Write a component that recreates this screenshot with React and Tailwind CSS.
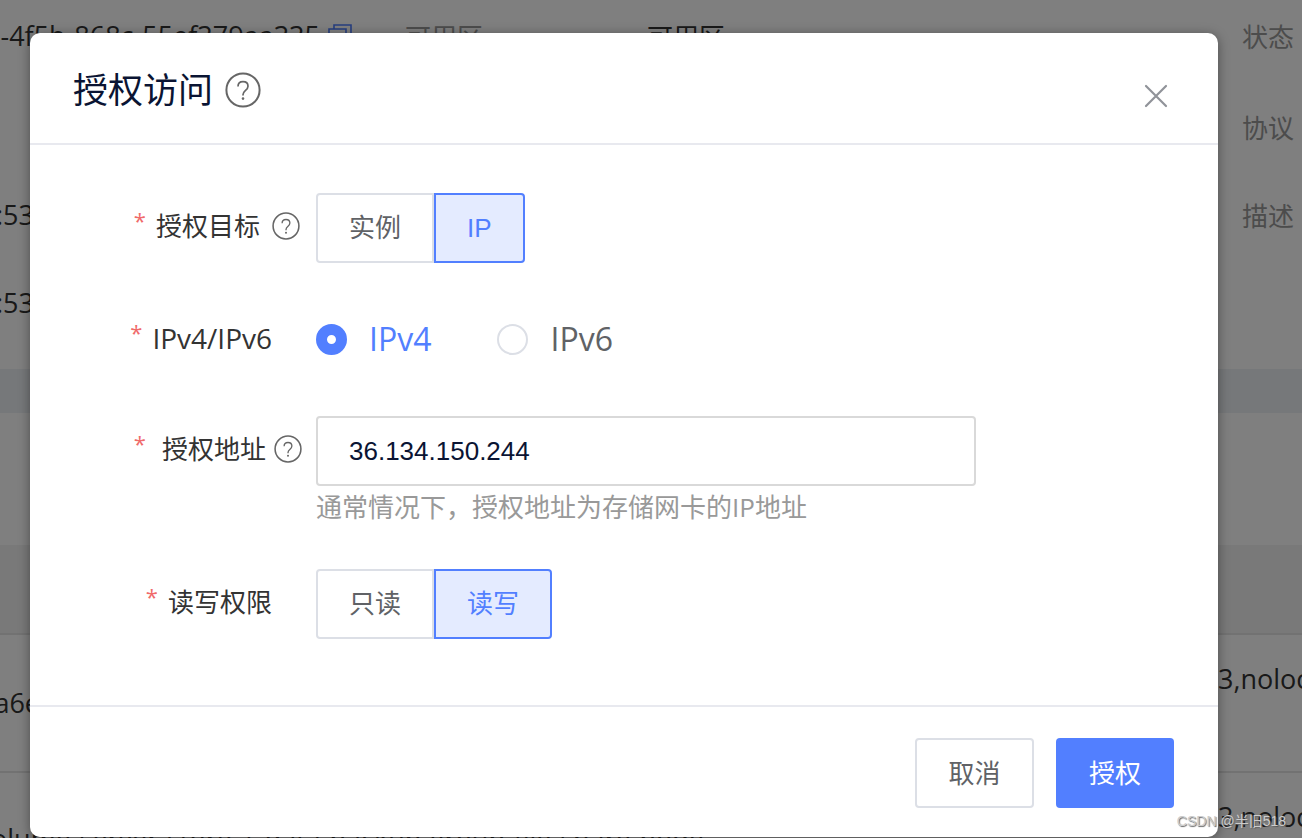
import { useState } from "react";

function HelpIcon({ className }) {
  return (
    <svg viewBox="0 0 36 36" className={className} fill="none" stroke="#666" aria-hidden="true">
      <circle cx="18" cy="18" r="16.6" strokeWidth="2" />
      <path
        d="M13 14.6c0-3 2-5 5-5s5 1.9 5 4.6c0 2.1-1.1 3.2-2.7 4.5-1.6 1.3-2.3 2.2-2.3 4.1v.7"
        strokeWidth="1.7"
      />
      <circle cx="18" cy="26.6" r="1.3" fill="#666" stroke="none" />
    </svg>
  );
}

function CopyIcon() {
  return (
    <svg viewBox="0 0 24 24" className="size-6" fill="none" stroke="#4d7cff" strokeWidth="1.6" aria-hidden="true">
      <path d="M6 5V1h17v17h-5" />
      <path d="M1 5h17v18H1z" />
    </svg>
  );
}

function FormLabel({ children, help, htmlFor, wide, latin }) {
  const Tag = htmlFor ? "label" : "div";
  const end = help ? (wide ? "pr-[14px]" : "pr-4") : "pr-11";
  return (
    <div
      className={`flex w-[286px] shrink-0 items-center justify-end text-[#333] ${end} ${
        latin ? "h-[68px] text-[28px]" : "h-[66px] text-[26px]"
      }`}
    >
      <span className={`pb-3 text-[22px] text-[#f06a6a] ${wide ? "mr-4" : "mr-[10px]"}`}>*</span>
      <Tag htmlFor={htmlFor}>{children}</Tag>
      {help && <HelpIcon className={`size-7 ${wide ? "ml-2" : "ml-3"}`} />}
    </div>
  );
}

function Segmented({ options, value, onChange, label }) {
  return (
    <div role="group" aria-label={label} className="flex h-[70px]">
      {options.map((o) => (
        <button
          key={o}
          type="button"
          aria-pressed={o === value}
          onClick={() => onChange(o)}
          className={`border-2 px-[31px] font-['Liberation_Sans','Noto_Sans_CJK_SC',sans-serif] text-[26px] first:rounded-l last:rounded-r ${
            o === value
              ? "border-[#527fff] bg-[#e4ebff] text-[#527fff]"
              : "border-[#dcdfe6] bg-white text-[#606266]"
          }`}
        >
          {o}
        </button>
      ))}
    </div>
  );
}

function Radio({ label, checked, onChange }) {
  return (
    <label className={`flex items-center gap-[22px] text-[32px] ${checked ? "text-[#527fff]" : "text-[#606266]"}`}>
      <input
        type="radio"
        name="ipVersion"
        checked={checked}
        onChange={onChange}
        className="size-[31px] appearance-none rounded-full border-2 border-[#dcdfe6] bg-white checked:border-[11px] checked:border-[#527fff]"
      />
      <span className="pb-[2px]">{label}</span>
    </label>
  );
}

function PageBehind() {
  return (
    <main className="h-full overflow-hidden whitespace-nowrap bg-white text-[27px] text-[#333]">
      <section className="h-[369px] pt-4">
        <div className="flex h-[89px] items-start">
          <div className="flex w-[405px] items-center">
            <div className="flex w-[320px] justify-end">-4f5b-868c-55ef379aa335</div>
            <span className="ml-2"><CopyIcon /></span>
          </div>
          <div className="w-[242px] pt-[2px] text-[26px] text-[#999]">可用区</div>
          <div className="flex-1 pt-[2px] text-[26px]">可用区</div>
          <div className="w-[60px] pt-[2px] text-[26px] text-[#999]">状态</div>
        </div>
        <div className="flex h-[90px] justify-end">
          <div className="w-[60px] pt-1 text-[26px] text-[#999]">协议</div>
        </div>
        <div className="flex h-[88px] justify-between">
          <div className="flex w-[34px] justify-end">:53</div>
          <div className="w-[60px] pt-[2px] text-[26px] text-[#999]">描述</div>
        </div>
        <div className="flex w-[34px] justify-end">:53</div>
      </section>
      <div className="h-11 bg-[#edf0f5]" />
      <div className="h-[132px]" />
      <div className="h-[90px] border-b-2 border-[#e4e4e4] bg-[#f3f3f3]" />
      <div className="flex h-[138px] justify-between border-b-2 border-[#e4e4e4]">
        <div className="flex w-10 justify-end pt-12">a6e</div>
        <div className="w-[84px] overflow-hidden pt-6">3,nolock</div>
      </div>
      <div className="flex h-[138px] justify-between">
        <div className="flex w-[704px] justify-end pt-[46px]">volume-server-store-1-data-backup-group-file-share-node</div>
        <div className="w-[84px] shrink-0 overflow-hidden pt-6">3,nolock</div>
      </div>
    </main>
  );
}

export default function App() {
  const [target, setTarget] = useState("IP");
  const [version, setVersion] = useState("IPv4");
  const [address, setAddress] = useState("36.134.150.244");
  const [access, setAccess] = useState("读写");

  return (
    <div className="relative h-screen overflow-hidden font-['Open_Sans','Noto_Sans_CJK_SC',sans-serif]">
      <PageBehind />
      <div className="absolute inset-0 flex items-start bg-black/50 pt-[33px] pr-[84px] pl-[30px]">
        <div
          role="dialog"
          aria-labelledby="dialog-title"
          className="min-w-0 flex-1 rounded-[10px] bg-white shadow-[0_2px_12px_rgba(0,0,0,0.4)]"
        >
          <header className="flex h-[112px] items-center justify-between border-b-2 border-[#e8e9ef] pr-12 pl-[43px]">
            <div className="flex items-center gap-3 pt-1">
              <h1 id="dialog-title" className="text-[35px] text-[#0a1433]">授权访问</h1>
              <HelpIcon className="size-9" />
            </div>
            <button type="button" aria-label="关闭" className="mt-4">
              <svg viewBox="0 0 28 28" className="size-7" fill="none" stroke="#909399" strokeWidth="2.2" strokeLinecap="round">
                <path d="M4 4l20 20M24 4L4 24" />
              </svg>
            </button>
          </header>

          <form className="flex flex-col gap-[41px] pt-12 pb-[66px]">
            <div className="flex items-start">
              <FormLabel help>授权目标</FormLabel>
              <Segmented label="授权目标" options={["实例", "IP"]} value={target} onChange={setTarget} />
            </div>

            <div className="flex h-[71px] items-start">
              <FormLabel latin>IPv4/IPv6</FormLabel>
              <div className="flex h-full items-center gap-[66px]">
                {["IPv4", "IPv6"].map((v) => (
                  <Radio key={v} label={v} checked={version === v} onChange={() => setVersion(v)} />
                ))}
              </div>
            </div>

            <div className="flex items-start">
              <FormLabel help wide htmlFor="address">授权地址</FormLabel>
              <div className="w-[660px]">
                <input
                  id="address"
                  type="text"
                  value={address}
                  onChange={(e) => setAddress(e.target.value)}
                  className="block h-[70px] w-full rounded border-2 border-[#d9d9d9] px-[31px] font-['Liberation_Sans',sans-serif] text-[26px] text-[#0a1433]"
                />
                <p className="text-[26px] leading-[42px] text-[#999]">通常情况下，授权地址为存储网卡的IP地址</p>
              </div>
            </div>

            <div className="flex items-start">
              <FormLabel>读写权限</FormLabel>
              <Segmented label="读写权限" options={["只读", "读写"]} value={access} onChange={setAccess} />
            </div>
          </form>

          <footer className="flex justify-end gap-[22px] border-t-2 border-[#e8e9ef] px-11 pt-[31px] pb-[29px] text-[26px]">
            <button type="button" className="h-[70px] w-[119px] rounded border-2 border-[#dcdfe6] text-[#606266]">取消</button>
            <button type="button" className="h-[70px] w-[118px] rounded bg-[#527fff] text-white">授权</button>
          </footer>
        </div>
      </div>
      <div className="absolute right-4 bottom-[6px] font-['Liberation_Sans','Noto_Sans_CJK_SC',sans-serif] text-[14px] text-[#ccc] [text-shadow:1px_1px_1px_#666]">
        CSDN @半旧518
      </div>
    </div>
  );
}
